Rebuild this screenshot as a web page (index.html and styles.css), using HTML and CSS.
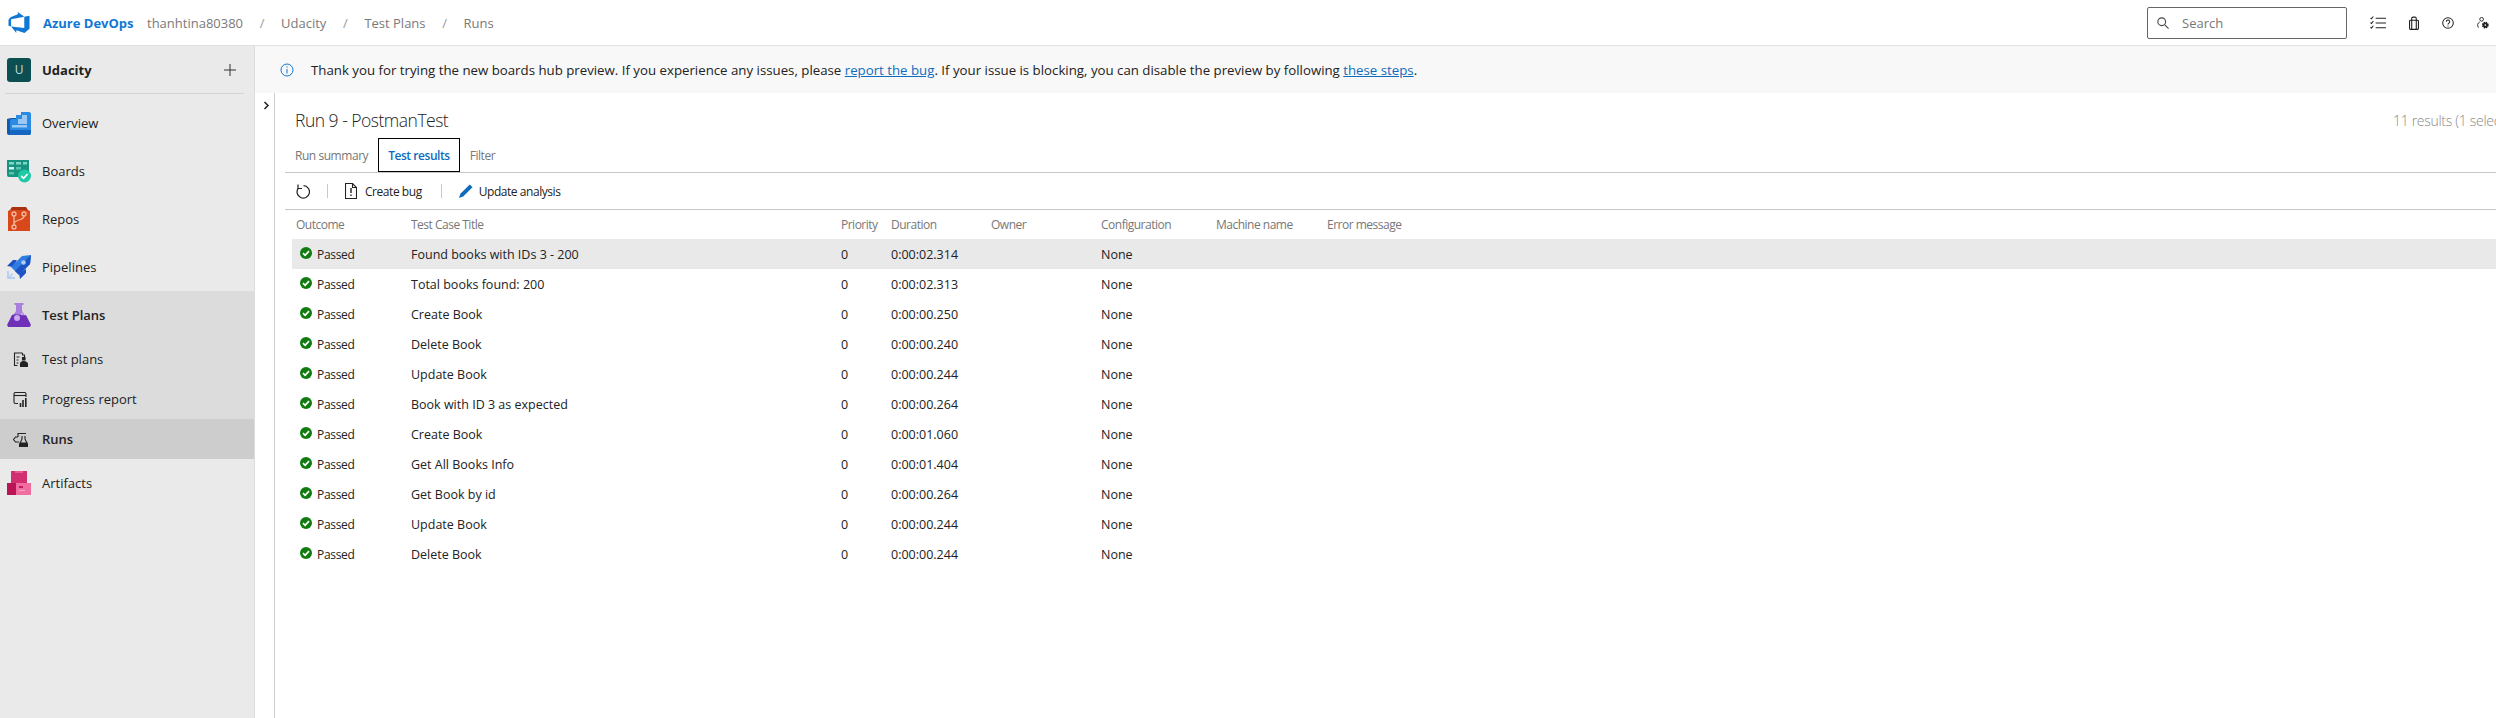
FILE: index.html
```html
<!DOCTYPE html>
<html>
  <head>
    <meta charset="utf-8">
    <link rel="stylesheet" href="styles.css">
    <title>Runs - Azure DevOps</title>
  </head>
  <body>
    <svg class="defs" width="0" height="0">
      <symbol id="check" viewBox="0 0 12 12"><circle cx="6" cy="6" r="6" fill="#107c10"/><path d="M3 6.200l2.100 2.100L9 4.100" fill="none" stroke="#fff" stroke-width="1.700"/></symbol>
    </svg>
    <header class="topbar">
      <svg class="logo" viewBox="0 0 24 24"><path fill="#0f78d4" d="M0 8.877L2.247 5.91l8.405-3.416V.022l7.37 5.393L2.966 8.338v8.225L0 15.707zm24-4.45v14.651l-5.753 4.9-9.303-3.057v3.056l-5.978-7.416 15.057 1.798V5.415z"/></svg>
      <span class="brand">Azure DevOps</span>
      <nav class="crumbs">
        <span>thanhtina80380</span><i>/</i><span>Udacity</span><i>/</i><span>Test Plans</span><i>/</i><span>Runs</span>
      </nav>
      <div class="search">
        <svg width="12" height="12" viewBox="0 0 14 14" fill="none" stroke="#444" stroke-width="1.300"><circle cx="5.500" cy="5.500" r="4.500"/><path d="M8.800 8.800l4.700 4.700"/></svg>
        <span>Search</span>
      </div>
      <div class="top-icons">
        <svg width="16" height="14" viewBox="0 0 17 15" fill="none" stroke="#222" stroke-width="1.100"><path d="M6 2.500h11M6 7.500h11M6 12.500h11"/><path d="M.5 2l1 1L3.500 .5M.5 7l1 1 2-2.500M.5 12l1 1 2-2.500"/></svg>
        <svg width="10" height="14" viewBox="0 0 11 15" fill="none" stroke="#222" stroke-width="1.200"><rect x=".6" y="4.500" width="9.800" height="10" rx="1"/><path d="M3 14V2.500a1.500 1.500 0 0 1 1.500-1.500h2a1.500 1.500 0 0 1 1.500 1.500V14"/></svg>
        <svg width="12" height="12" viewBox="0 0 14 14" fill="none" stroke="#222" stroke-width="1.200"><circle cx="7" cy="7" r="6.200"/><path d="M5 5.500a2 2 0 1 1 3 1.700c-.7.4-1 .8-1 1.600"/><path d="M7 10v1.200"/></svg>
        <svg width="12" height="12" viewBox="0 0 13 13" fill="none" stroke="#222"><circle cx="5" cy="2.500" r="2"/><path d="M3 5.500C.5 6.500 0 9 1.500 11.500"/><circle cx="9" cy="8.800" r="2.900" fill="#222" stroke-width="1.500" stroke-dasharray="1.500 .8"/><circle cx="9" cy="8.800" r=".9" fill="#fff" stroke="none"/></svg>
      </div>
    </header>

    <div class="shell">
      <aside class="sidebar">
        <div class="org">
          <span class="tile">U</span>
          <span class="org-name">Udacity</span>
          <svg class="plus" width="12" height="12" viewBox="0 0 13 13" stroke="#333" stroke-width="1.100"><path d="M6.500 0v13M0 6.500h13"/></svg>
        </div>
        <ul class="nav">
          <li class="nav-item">
            <svg class="nav-icon" viewBox="0 0 24 24"><path fill="#0f5cae" d="M0 8l4-1h8v17H2a2 2 0 0 1-2-2z"/><path fill="#2a8ae4" d="M5 8h4V4h5V1h8a2 2 0 0 1 2 2v19a2 2 0 0 1-2 2H5a2 2 0 0 1-2-2V10a2 2 0 0 1 2-2z"/><path fill="#9cc9f3" d="M11 11V8h4V4h5v9h-9zM5 14h15v2.500H5z"/><path fill="#1566c0" d="M5 19h19v3a2 2 0 0 1-2 2H5a2 2 0 0 1-2-2v-3z"/></svg>
            Overview
          </li>
          <li class="nav-item">
            <svg class="nav-icon" viewBox="0 0 24 24"><path fill="#179480" d="M0 1h22v17H2a2 2 0 0 1-2-2z"/><path fill="#7fd8c6" d="M2 3h5v2.500H2zM9 3h5v2.500H9zM16 3h4v2.500h-4z"/><path fill="#d8f3ec" d="M2 8h5v2.500H2z"/><path fill="#58c4ae" d="M9 8h5v2.500H9zM2 13h5v2.500H2z"/><circle cx="17.500" cy="17" r="6.500" fill="#1fc9a6"/><path d="M14.300 17l2.300 2.300 4-4.300" stroke="#fff" stroke-width="1.800" fill="none"/></svg>
            Boards
          </li>
          <li class="nav-item">
            <svg class="nav-icon" viewBox="0 0 24 24"><path fill="#a8320f" d="M3 3l2-3h14l2 3z"/><path fill="#d9481a" d="M1 4l2-1h18l2 1v20H1z"/><g fill="none" stroke="#f5b9a1" stroke-width="1.300"><circle cx="7" cy="7" r="2"/><circle cx="17" cy="7" r="2"/><circle cx="7" cy="20" r="2"/><path d="M7 9v9M17 9c0 5-10 3-10 8"/></g></svg>
            Repos
          </li>
          <li class="nav-item">
            <svg class="nav-icon" viewBox="0 0 24 24"><path fill="#1b52c4" d="M10 5H6L0 11l6 1zM19 14v4l-6 6-1-6z"/><path fill="#2f7be0" d="M15 1l9-1-1 9-11 11-8-8z"/><path fill="#1b52c4" d="M23 9L12 20l-4-4L24 0z"/><circle cx="16.500" cy="7.500" r="2.300" fill="#a9cdf5"/><path fill="none" stroke="#a9c6f5" stroke-width="1.500" d="M1 16v7h7"/><path fill="#a9c6f5" d="M2 22l3-4 1 1-3 3.500z"/></svg>
            Pipelines
          </li>
          <li class="nav-group">
            <div class="nav-item nav-head">
              <svg class="nav-icon" viewBox="0 0 24 24"><path fill="#a87fdc" d="M7.500 0h9v2h-1.500v6l8.500 13c.6 1.500-.4 3-2 3H2.500c-1.600 0-2.600-1.500-2-3L9 8V2H7.500z"/><path fill="#6f30b8" d="M5 12c5-2 9 1 14 0l4.500 9c.6 1.500-.4 3-2 3H2.500c-1.600 0-2.600-1.500-2-3z"/><circle cx="10" cy="15" r="3" fill="#c9a8ee"/><circle cx="15" cy="11" r="1.300" fill="#c9a8ee"/></svg>
              Test Plans
            </div>
            <div class="sub-item">
              <svg class="sub-icon" viewBox="0 0 14 15" fill="none" stroke="#222" stroke-width="1.100"><path d="M9 1H1v12.500h3M9 1v2h2v2"/><path d="M3 5h3M3 8h2M3 11h2"/><path fill="#222" d="M9 5.500h2.500V8H9zM7 12c0-1.500 1.500-2.500 3.200-2.500S14 10.500 14 12v2.500H7z"/></svg>
              Test plans
            </div>
            <div class="sub-item">
              <svg class="sub-icon" viewBox="0 0 15 15" fill="none" stroke="#222" stroke-width="1.100"><path d="M5 11.500H2.500a1.500 1.500 0 0 1-1.500-1.500V2a1.500 1.500 0 0 1 1.500-1.500h9A1.500 1.500 0 0 1 13 2v3"/><path d="M1 3.500h12"/><path stroke-width="1.600" d="M7.500 11v4M10 8v7M12.800 6v9"/></svg>
              Progress report
            </div>
            <div class="sub-item sub-active">
              <svg class="sub-icon" viewBox="0 0 15 15" fill="none" stroke="#222" stroke-width="1.100"><path d="M5 5V1.500h8M5 5H2.500L.5 7.500l2 2.500H6"/><path d="M9 4v3l-2.500 5.500v2h8v-2L12 7V4"/><path fill="#222" d="M7 11h7v3.500H7z"/></svg>
              Runs
            </div>
          </li>
          <li class="nav-item">
            <svg class="nav-icon" viewBox="0 0 24 24"><path fill="#d12f70" d="M4 0h16v12H4z"/><path fill="#b81456" d="M0 12h11v12H0z"/><path fill="#ef6da0" d="M9 12h15v12H9z"/><path fill="#e85b92" d="M8 0h8v2H8z"/><path fill="#c21a5e" d="M12 15h4v2h-4z"/><path fill="#f8a4c4" d="M12 19h6v1h-6z"/></svg>
            Artifacts
          </li>
        </ul>
      </aside>

      <div class="page">
        <div class="banner">
          <svg class="info" width="14" height="14" viewBox="0 0 14 14" fill="none" stroke="#0f78d4"><circle cx="7" cy="7" r="6"/><path d="M7 6v4.500M7 3.500v1.200"/></svg>
          <span>Thank you for trying the new boards hub preview. If you experience any issues, please <a href="#">report the bug</a>. If your issue is blocking, you can disable the preview by following <a href="#">these steps</a>.</span>
        </div>
        <div class="body-row">
          <div class="strip">
            <svg width="7" height="9" viewBox="0 0 7 9" fill="none" stroke="#222" stroke-width="1.500"><path d="M1.500 1l3.500 3.500L1.500 8"/></svg>
          </div>
          <main class="main">
            <div class="title-row">
              <h1 class="run-title">Run 9 - PostmanTest</h1>
              <span class="results">11 results (1 selected)</span>
            </div>
            <div class="tabs">
              <span class="tab">Run summary</span>
              <span class="tab tab-on">Test results</span>
              <span class="tab">Filter</span>
            </div>
            <div class="toolbar">
              <svg width="14" height="15" viewBox="0 0 14 15" fill="none" stroke="#222" stroke-width="1.200"><path d="M7.500 1.700a6.200 6.200 0 1 1-5.300 2.600"/><path d="M2 .5v4h4"/></svg>
              <span class="tool-sep"></span>
              <svg width="12" height="16" viewBox="0 0 12 16" fill="none" stroke="#222" stroke-width="1.100"><path d="M.5 .5h7l4 4v11H.5z"/><path d="M7.500 .5v4h4"/><path stroke-width="1.400" d="M6 5v5M6 11.500v1.500"/></svg>
              <span class="tool-label">Create bug</span>
              <span class="tool-sep"></span>
              <svg width="14" height="14" viewBox="0 0 15 15"><path fill="#0f6cbd" d="M11.500 .5l3 3L4.500 13.500 0 15l1.500-4.500z"/></svg>
              <span class="tool-label">Update analysis</span>
            </div>
            <div class="grid">
              <div class="row row-head">
                <span class="cell-first">Outcome</span><span>Test Case Title</span><span>Priority</span><span>Duration</span><span>Owner</span><span>Configuration</span><span>Machine name</span><span>Error message</span>
              </div>
              <div class="row row-sel"><span class="passed"><svg><use href="#check"/></svg>Passed</span><span>Found books with IDs 3 - 200</span><span>0</span><span>0:00:02.314</span><span></span><span>None</span></div>
              <div class="row"><span class="passed"><svg><use href="#check"/></svg>Passed</span><span>Total books found: 200</span><span>0</span><span>0:00:02.313</span><span></span><span>None</span></div>
              <div class="row"><span class="passed"><svg><use href="#check"/></svg>Passed</span><span>Create Book</span><span>0</span><span>0:00:00.250</span><span></span><span>None</span></div>
              <div class="row"><span class="passed"><svg><use href="#check"/></svg>Passed</span><span>Delete Book</span><span>0</span><span>0:00:00.240</span><span></span><span>None</span></div>
              <div class="row"><span class="passed"><svg><use href="#check"/></svg>Passed</span><span>Update Book</span><span>0</span><span>0:00:00.244</span><span></span><span>None</span></div>
              <div class="row"><span class="passed"><svg><use href="#check"/></svg>Passed</span><span>Book with ID 3 as expected</span><span>0</span><span>0:00:00.264</span><span></span><span>None</span></div>
              <div class="row"><span class="passed"><svg><use href="#check"/></svg>Passed</span><span>Create Book</span><span>0</span><span>0:00:01.060</span><span></span><span>None</span></div>
              <div class="row"><span class="passed"><svg><use href="#check"/></svg>Passed</span><span>Get All Books Info</span><span>0</span><span>0:00:01.404</span><span></span><span>None</span></div>
              <div class="row"><span class="passed"><svg><use href="#check"/></svg>Passed</span><span>Get Book by id</span><span>0</span><span>0:00:00.264</span><span></span><span>None</span></div>
              <div class="row"><span class="passed"><svg><use href="#check"/></svg>Passed</span><span>Update Book</span><span>0</span><span>0:00:00.244</span><span></span><span>None</span></div>
              <div class="row"><span class="passed"><svg><use href="#check"/></svg>Passed</span><span>Delete Book</span><span>0</span><span>0:00:00.244</span><span></span><span>None</span></div>
            </div>
          </main>
        </div>
      </div>
    </div>
  </body>
</html>
```

FILE: styles.css
```css
* {
  box-sizing: border-box;
}
html, body {
  margin: 0;
  height: 718px;
  overflow: hidden;
}
body {
  width: 2496px;
  font-family: "Open Sans", "Noto Sans", sans-serif;
  font-size: 13px;
  color: #222;
  background: #fff;
}
svg {
  flex: none;
  display: block;
}
.defs {
  display: none;
}

.topbar {
  height: 46px;
  border-bottom: 1px solid #e2e2e2;
  display: flex;
  align-items: center;
  padding-left: 8px;
}
.logo {
  width: 22px;
  height: 21px;
}
.brand {
  margin-left: 13px;
  font-weight: 700;
  color: #0f78d4;
  width: 104px;
  white-space: nowrap;
}
.crumbs {
  display: flex;
  color: #7a7a7a;
  white-space: nowrap;
}
.crumbs i {
  font-style: normal;
  width: 38px;
  text-align: center;
  color: #999;
}
.search {
  margin-left: auto;
  width: 200px;
  height: 32px;
  border: 1px solid #666;
  border-radius: 2px;
  display: flex;
  align-items: center;
  padding-left: 9px;
  color: #777;
}
.search span {
  margin-left: 13px;
}
.top-icons {
  display: flex;
  align-items: center;
  gap: 23px;
  margin: 0 7px 0 23px;
}

.shell {
  display: flex;
  height: 672px;
}
.sidebar {
  width: 255px;
  flex: none;
  background: #eaeaea;
  border-right: 1px solid #dcdcdc;
}
.org {
  height: 48px;
  margin: 0 10px 0 5px;
  display: flex;
  align-items: center;
  padding-left: 2px;
  border-bottom: 1px solid #d4d4d4;
}
.tile {
  width: 24px;
  height: 24px;
  border-radius: 3px;
  background: #0b4f52;
  color: #c9dcdc;
  display: flex;
  align-items: center;
  justify-content: center;
  font-size: 12px;
}
.org-name {
  margin-left: 11px;
  font-weight: 700;
}
.plus {
  margin-left: auto;
  margin-right: 8px;
}
.nav {
  list-style: none;
  margin: 0;
  padding: 5px 0 0;
}
.nav-item {
  height: 48px;
  display: flex;
  align-items: center;
  padding-left: 7px;
}
.nav-icon {
  width: 24px;
  height: 24px;
  margin-right: 11px;
}
.nav-group {
  background: #dcdcdc;
}
.nav-head {
  font-weight: 600;
}
.sub-item {
  height: 40px;
  display: flex;
  align-items: center;
  padding-left: 13px;
}
.sub-icon {
  width: 15px;
  height: 15px;
  margin-right: 14px;
}
.sub-active {
  background: #cdcdcd;
  font-weight: 600;
}

.page {
  flex: 1;
  min-width: 0;
  display: flex;
  flex-direction: column;
}
.banner {
  height: 47px;
  background: #f8f8f8;
  display: flex;
  align-items: center;
  padding-left: 25px;
  white-space: nowrap;
  font-size: 13.25px;
}
.banner a {
  color: #0f6cbd;
}
.info {
  margin-right: 17px;
}
.body-row {
  flex: 1;
  display: flex;
  min-height: 0;
}
.strip {
  width: 20px;
  flex: none;
  border-right: 1px solid #cfcfcf;
  padding: 8px 0 0 8px;
}
.main {
  flex: 1;
  min-width: 0;
  overflow: hidden;
  padding-left: 10px;
}

.title-row {
  height: 45px;
  padding: 9px 0 0 10px;
  display: flex;
  align-items: center;
}
.run-title {
  margin: 0;
  width: 2098px;
  flex: none;
  font-size: 17.5px;
  font-weight: 300;
  letter-spacing: -.5px;
  white-space: nowrap;
}
.results {
  flex: none;
  white-space: nowrap;
  font-size: 14px;
  font-weight: 300;
  letter-spacing: -.3px;
  color: #888;
}
.tabs {
  height: 35px;
  border-bottom: 1px solid #c8c8c8;
  display: flex;
  align-items: stretch;
  padding-left: 10px;
  color: #777;
  font-size: 12px;
  letter-spacing: -.45px;
}
.tab {
  display: flex;
  align-items: center;
  padding: 0 9px;
  border: 1px solid transparent;
}
.tab:first-child {
  padding-left: 0;
  border-left: 0;
}
.tab-on {
  border-color: #000;
  color: #0f6cbd;
  font-weight: 600;
}
.toolbar {
  height: 37px;
  border-bottom: 1px solid #c8c8c8;
  display: flex;
  align-items: center;
  padding-left: 11px;
  font-size: 12px;
  letter-spacing: -.45px;
}
.tool-sep {
  width: 1px;
  height: 14px;
  background: #c8c8c8;
  margin: 0 17px;
}
.tool-label {
  margin-left: 8px;
}
.tool-label + .tool-sep {
  margin: 0 17px 0 19px;
}
.tool-label + .tool-sep + svg + .tool-label {
  margin-left: 6px;
}

.row {
  display: grid;
  grid-template-columns: 119px 430px 50px 100px 110px 115px 111px 1fr;
  align-items: center;
  height: 30px;
  margin-left: 7px;
  white-space: nowrap;
  font-size: 12.5px;
}
.row-head {
  height: 29px;
  color: #777;
  font-size: 12px;
  letter-spacing: -.5px;
}
.row-head .cell-first {
  padding-left: 4px;
}
.row-sel {
  background: #e9e9e9;
}
.passed {
  display: flex;
  align-items: center;
  padding-left: 8px;
  font-size: 12px;
  letter-spacing: -.3px;
}
.passed svg {
  width: 12px;
  height: 12px;
  margin-right: 5px;
  margin-top: -2px;
}
```
